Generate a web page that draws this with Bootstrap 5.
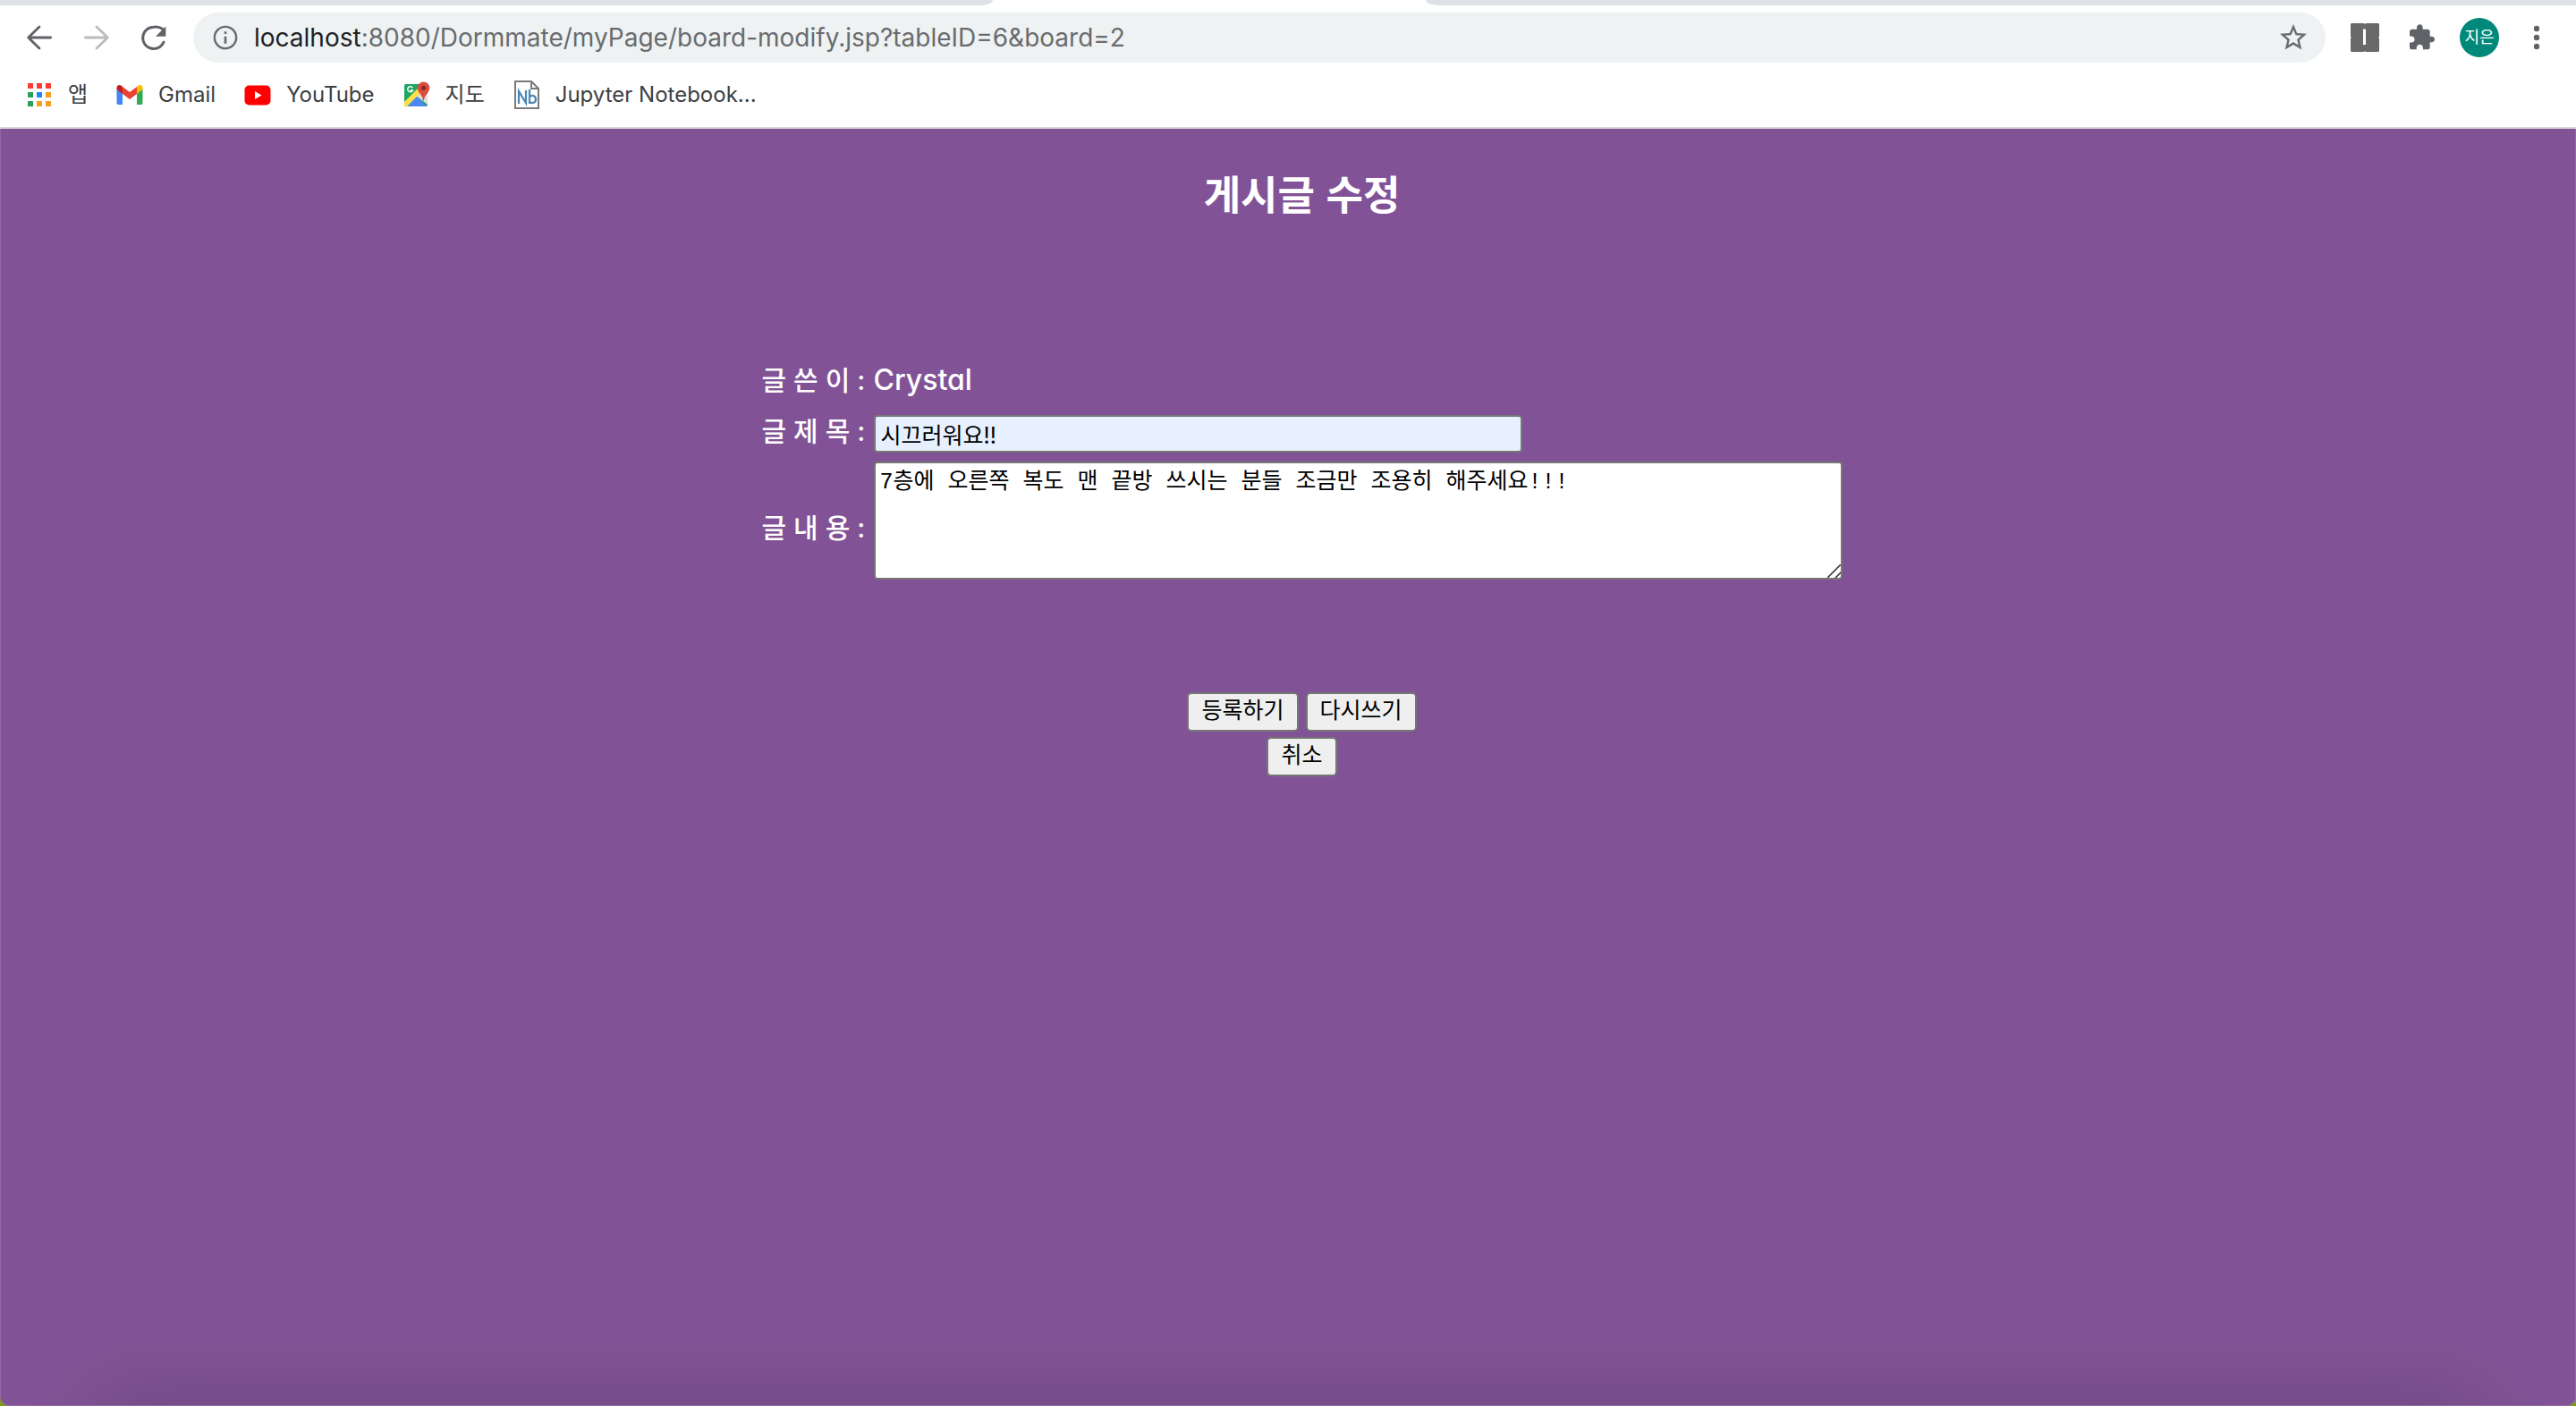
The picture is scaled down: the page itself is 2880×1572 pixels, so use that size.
<!DOCTYPE html>
<html lang="ko">
<head>
<meta charset="utf-8">
<meta name="viewport" content="width=device-width, initial-scale=1">
<title>게시글 수정</title>
<link rel="stylesheet" href="https://cdn.jsdelivr.net/npm/bootstrap@5.3.0/dist/css/bootstrap.min.css">
<style>
  body { background: #7f9a1c; font-family: Inter, "Noto Sans CJK KR", sans-serif; }
  svg { display: block; flex: none; }

  /* browser frame */
  .tab-strip { height: 6px; background: #fff; }
  .tab-rest { background: #dee1e6; }
  .tab-before { width: 1110px; border-bottom-right-radius: 14px 6px; }
  .tab-current { width: 484px; }
  .tab-after { border-bottom-left-radius: 14px 6px; }
  .tool-row { padding: 8px 30px 0 24px; gap: 24px; color: #5f6368; }
  .tool-actions { gap: 28px; margin-left: 4px; }
  .icon-btn { padding: 0; border: 0; background: none; color: inherit; }
  .icon-btn:disabled { color: #babcbe; }
  .address { height: 56px; padding: 0 18px 0 20px; gap: 16px; background: #eef2f3; font-size: 28px; line-height: 36px; color: #696b6e; }
  .address b { font-weight: 400; color: #202124; }
  .avatar { width: 44px; height: 44px; background: #00897b; color: #fff; font-size: 18px; line-height: 44px; }
  .mark-row { height: 74px; padding: 0 28px; gap: 31px; border-bottom: 2px solid #d5d8dc; }
  .mark-link { gap: 16px; font-size: 24px; line-height: 32px; color: #3c4043; text-decoration: none; }

  /* page */
  .board { background: #815396; color: #fff; padding: 38px 0 0 31px; border-radius: 0 0 10px 10px; border: 1px solid #9069a3; border-top: 0; }
  .board::after { content: ""; position: absolute; left: 130px; right: 130px; bottom: -60px; height: 40px; box-shadow: 0 0 90px 20px rgba(0, 0, 0, .18); }
  .board-title { font-size: 45px; line-height: 68px; margin-bottom: 150px; font-weight: 700; font-family: "Noto Sans CJK KR", sans-serif; }
  .board-fields { display: grid; grid-template-columns: 116px 1fr; gap: 10px 9px; width: 1208px; max-width: 100%; margin-bottom: 120px; font-size: 32px; line-height: 50px; font-weight: 500; white-space: nowrap; }
  .field-name, .writer-name { font-size: 30px; }
  .field-name { line-height: 36px; }
  .writer { font-feature-settings: "cv11"; }
  .field-box { border: 2px solid #767676; border-radius: 4px; color: #000; font-size: 25px; font-weight: 400; line-height: 36px; }
  .title-box { width: 725px; height: 42px; padding: 0 6px; background: #e6f0fe; }
  .text-box { width: 100%; height: 132px; padding: 4px 5px; background: #fff; font-family: "Liberation Mono", "Noto Sans CJK KR", monospace; }
  .text-box::-webkit-resizer { background: linear-gradient(135deg, transparent 46%, #555 47% 54%, transparent 55% 76%, #555 77% 84%, transparent 85%); }
  .push { border: 2px solid #767676; border-radius: 5px; background: #efefef; color: #000; height: 44px; padding: 0 14px 4px; font-size: 25px; line-height: 36px; }
  .push-rows { gap: 6px; }
</style>
<script src="https://cdn.jsdelivr.net/npm/bootstrap@5.3.0/dist/js/bootstrap.bundle.min.js"></script>
</head>
<body class="d-flex flex-column min-vh-100">

<header class="bg-white">
  <div class="tab-strip d-flex">
    <div class="tab-rest tab-before"></div>
    <div class="tab-current"></div>
    <div class="tab-rest tab-after flex-fill"></div>
  </div>
  <div class="tool-row d-flex align-items-center">
    <button class="icon-btn" type="button" aria-label="뒤로"><svg width="40" height="40" viewBox="0 0 24 24" fill="none" stroke="currentColor" stroke-width="1.7" stroke-linecap="round" stroke-linejoin="round"><path d="M19.6 12H4.8M12 4.8 4.6 12l7.4 7.200"/></svg></button>
    <button class="icon-btn" type="button" aria-label="앞으로" disabled><svg width="40" height="40" viewBox="0 0 24 24" fill="none" stroke="currentColor" stroke-width="1.7" stroke-linecap="round" stroke-linejoin="round"><path d="M4.400 12h14.800M12 4.800 19.400 12 12 19.200"/></svg></button>
    <button class="icon-btn" type="button" aria-label="새로고침"><svg width="40" height="40" viewBox="0 0 24 24"><path d="M17.900 6.300A8 8 0 0 0 12 4.900a7.300 7.300 0 1 0 6.600 10.200" fill="none" stroke="currentColor" stroke-width="1.800" stroke-linecap="round"/><path d="M20 4.500v6.800h-6.800z" fill="currentColor"/></svg></button>
    <div class="address d-flex align-items-center flex-fill rounded-pill">
      <svg width="32" height="32" viewBox="0 0 24 24" fill="currentColor"><path d="M11 17h2v-6h-2v6zm1-15a10 10 0 1 0 0 20 10 10 0 0 0 0-20zm0 18.200a8.200 8.200 0 1 1 0-16.400 8.200 8.200 0 0 1 0 16.400zM11 9h2V7h-2v2z"/></svg>
      <div class="flex-fill" role="textbox" aria-label="주소창"><b>localhost</b>:8080/Dormmate/myPage/board-modify.jsp?tableID=6&amp;board=2</div>
      <button class="icon-btn" type="button" aria-label="북마크 추가"><svg width="36" height="36" viewBox="0 0 24 24" fill="currentColor"><path d="M22 9.240l-7.190-.62L12 2 9.190 8.630 2 9.240l5.460 4.730L5.820 21 12 17.270 18.180 21l-1.630-7.030L22 9.240zM12 15.400l-3.760 2.270 1-4.280-3.320-2.880 4.380-.38L12 6.100l1.710 4.040 4.380.38-3.320 2.880 1 4.280L12 15.400z"/></svg></button>
    </div>
    <div class="tool-actions d-flex align-items-center">
      <button class="icon-btn" type="button" aria-label="확장 프로그램 I"><svg width="32" height="32" viewBox="0 0 32 32"><path d="M1 0h14l1 1 1-1h14l1 1v14l-1 1 1 1v14l-1 1H17l-1-1-1 1H1l-1-1V17l1-1-1-1V1z" fill="#696969"/><path d="M14 6.500h3V24h-3z" fill="#fff"/></svg></button>
      <button class="icon-btn" type="button" aria-label="확장 프로그램"><svg width="34" height="32" viewBox="-2.500 0 25.500 24" fill="currentColor"><path d="M20.500 11H19V7c0-1.100-.9-2-2-2h-4V3.500C13 2.120 11.880 1 10.500 1S8 2.120 8 3.500V5H4c-1.100 0-1.990.9-1.990 2v3.800H3.500c1.490 0 2.700 1.210 2.700 2.700s-1.210 2.700-2.700 2.700H2V20c0 1.100.9 2 2 2h3.800v-1.500c0-1.490 1.210-2.700 2.700-2.700s2.700 1.210 2.700 2.700V22H17c1.100 0 2-.9 2-2v-4h1.500c1.380 0 2.500-1.120 2.500-2.500S21.880 11 20.500 11z"/></svg></button>
      <button class="icon-btn avatar rounded-circle text-center" type="button">지은</button>
      <button class="icon-btn" type="button" aria-label="메뉴"><svg width="28" height="32" viewBox="0 0 28 32" fill="currentColor"><circle cx="14" cy="6" r="3.200"/><circle cx="14" cy="16" r="3.200"/><circle cx="14" cy="26" r="3.200"/></svg></button>
    </div>
  </div>
  <nav class="mark-row d-flex align-items-center" aria-label="북마크">
    <a class="mark-link d-flex align-items-center" href="#"><svg width="32" height="32" viewBox="0 0 32 32"><path d="M3 3h6v6H3zM13 3h6v6h-6zM23 3h6v6h-6z" fill="#fb3b35"/><path d="M3 13h6v6H3zM3 23h6v6H3z" fill="#2c9f5d"/><path d="M13 13h6v6h-6z" fill="#1a8cf0"/><path d="M23 13h6v6h-6zM13 23h6v6h-6zM23 23h6v6h-6z" fill="#f3a022"/></svg><span>앱</span></a>
    <a class="mark-link d-flex align-items-center" href="#"><svg width="32" height="32" viewBox="0 0 32 32"><path d="M1.500 9v16c0 1 .8 2 2 2H8V14z" fill="#4285f4"/><path d="M24 14v13h4.500c1.200 0 2-.9 2-2V9z" fill="#34a853"/><path d="M24 7.500V15l6.500-5V8c0-2.600-2.900-4-5-2.500z" fill="#fbbc04"/><path d="M8 15V7l8 6 8-6v8l-8 6z" fill="#ea4335"/><path d="M1.500 8v2L8 15V7L6.500 5.500C4.400 4 1.500 5.400 1.500 8z" fill="#c5221f"/></svg><span>Gmail</span></a>
    <a class="mark-link d-flex align-items-center" href="#"><svg width="32" height="32" viewBox="0 0 32 32"><rect x="1.500" y="5.500" width="29" height="22" rx="5" fill="#f00"/><path d="M13 12v9l7.500-4.500z" fill="#fff"/></svg><span>YouTube</span></a>
    <a class="mark-link d-flex align-items-center" href="#"><svg width="32" height="32" viewBox="0 0 32 32"><rect x="2" y="4" width="26" height="25" rx="2" fill="#1fa463"/><path d="M4 29 16 17l11 12z" fill="#4a89f3"/><path d="m15 17 4-4 9 2v12z" fill="#dcdcdc"/><path d="M2 24 20 6l3 5L4.500 29.500 2 28z" fill="#ffe047"/><path d="M11.300 8.200A3 3 0 1 0 11.500 11H8.500" fill="none" stroke="#fff" stroke-width="1.500"/><path d="M23.500 1.500a6.800 6.800 0 0 0-6.800 6.800c0 5.200 5.600 7 6.800 15.200 1.200-8.200 6.800-10 6.800-15.200a6.800 6.800 0 0 0-6.800-6.800z" fill="#dd4b3e"/><circle cx="23.500" cy="8.300" r="2.600" fill="#802d27"/></svg><span>지도</span></a>
    <a class="mark-link d-flex align-items-center" href="#"><svg width="32" height="34" viewBox="0 0 32 34"><path d="M3 2h18l8 8v22H3z" fill="#fff" stroke="#7b7b7b" stroke-width="2"/><path d="M21 2v8h8" fill="none" stroke="#7b7b7b" stroke-width="2"/><path d="M7 27V13l8 13V12" fill="none" stroke="#4b86b4" stroke-width="2.200"/><path d="M19 11v16m0-7c1-3 7-3 7 2s-6 5-7 2" fill="none" stroke="#4b86b4" stroke-width="2.200"/></svg><span>Jupyter Notebook...</span></a>
  </nav>
</header>

<main class="board flex-fill position-relative overflow-hidden d-flex flex-column align-items-center">
  <h1 class="board-title">게시글 수정</h1>
  <form class="push-rows d-flex flex-column align-items-center mw-100">
    <div class="board-fields">
      <span class="writer-name pb-1">글 쓴 이 :</span>
      <span class="writer pb-1">Crystal</span>
      <label class="field-name" for="subject">글 제 목 :</label>
      <input class="field-box title-box" id="subject" type="text" value="시끄러워요!!">
      <label class="field-name align-self-center pt-3" for="content">글 내 용 :</label>
      <textarea class="field-box text-box" id="content">7층에 오른쪽 복도 맨 끝방 쓰시는 분들 조금만 조용히 해주세요!!!</textarea>
    </div>
    <div class="d-flex gap-2">
      <button class="push" type="submit">등록하기</button>
      <button class="push" type="reset">다시쓰기</button>
    </div>
    <button class="push" type="button">취소</button>
  </form>
</main>

</body>
</html>
